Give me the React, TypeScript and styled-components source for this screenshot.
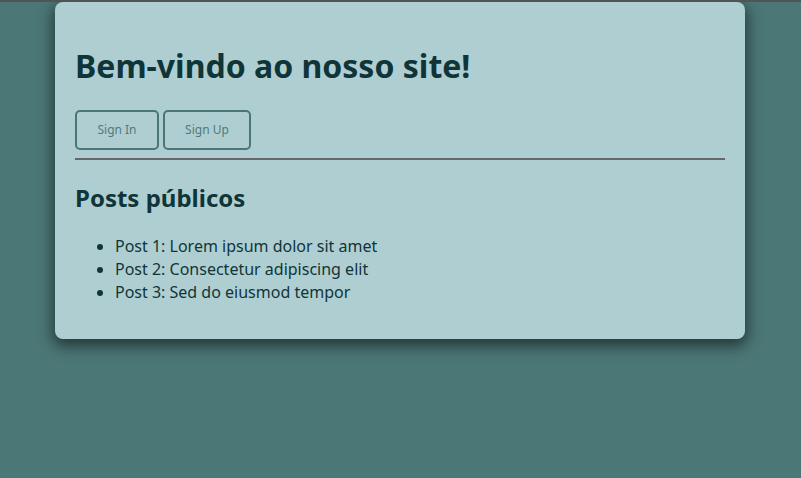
import {ReactNode} from "react";
import styled, {createGlobalStyle} from "styled-components";

const GlobalStyle = createGlobalStyle`
  html, body {
    margin: 0;
    padding: 0;
    background: #4c7777;
    font-family: "Noto Sans", "Open Sans", sans-serif;
  }

  body {
    border-top: 2px solid #4f5555;
    padding-right: 1px;
    min-height: 100vh;
    box-sizing: border-box;
  }
`;

const Card = styled.main`
  width: 690px;
  margin: 0 auto;
  box-sizing: border-box;
  padding: 20px;
  background: #afced1;
  border-radius: 8px;
  box-shadow: 0 5px 15px 2px rgba(0, 0, 0, 0.55);
  color: #0f3538;
`;

const Title = styled.h1`
  font-size: 32px;
  font-weight: bold;
  margin: 22px 0 21px;
  line-height: 1.4;
`;

const ButtonRow = styled.div`
  display: flex;
  gap: 4px;
`;

const AuthButton = styled.button<{$width: number}>`
  width: ${props => props.$width}px;
  height: 40px;
  background: transparent;
  border: 2px solid #4a7676;
  border-radius: 5px;
  color: #4f7b7c;
  font-family: "Noto Sans", sans-serif;
  font-size: 12px;
  cursor: pointer;
`;

const Divider = styled.hr`
  border: none;
  height: 2px;
  background: #646868;
  margin: 8px 0 0;
`;

const SectionTitle = styled.h2`
  font-size: 24px;
  font-weight: bold;
  margin: 21px 0 21px;
  line-height: 1.4;
`;

const PostList = styled.ul`
  margin: 0 0 15px;
  padding-left: 40px;
  font-size: 16px;
  line-height: 23px;
`;

export default function App(): ReactNode {
    const posts = [
        "Post 1: Lorem ipsum dolor sit amet",
        "Post 2: Consectetur adipiscing elit",
        "Post 3: Sed do eiusmod tempor",
    ];

    return (
        <>
            <GlobalStyle />
            <Card>
                <Title>Bem-vindo ao nosso site!</Title>
                <ButtonRow>
                    <AuthButton $width={84}>Sign In</AuthButton>
                    <AuthButton $width={88}>Sign Up</AuthButton>
                </ButtonRow>
                <Divider />
                <SectionTitle>Posts públicos</SectionTitle>
                <PostList>
                    {posts.map(post => <li key={post}>{post}</li>)}
                </PostList>
            </Card>
        </>
    )
}
